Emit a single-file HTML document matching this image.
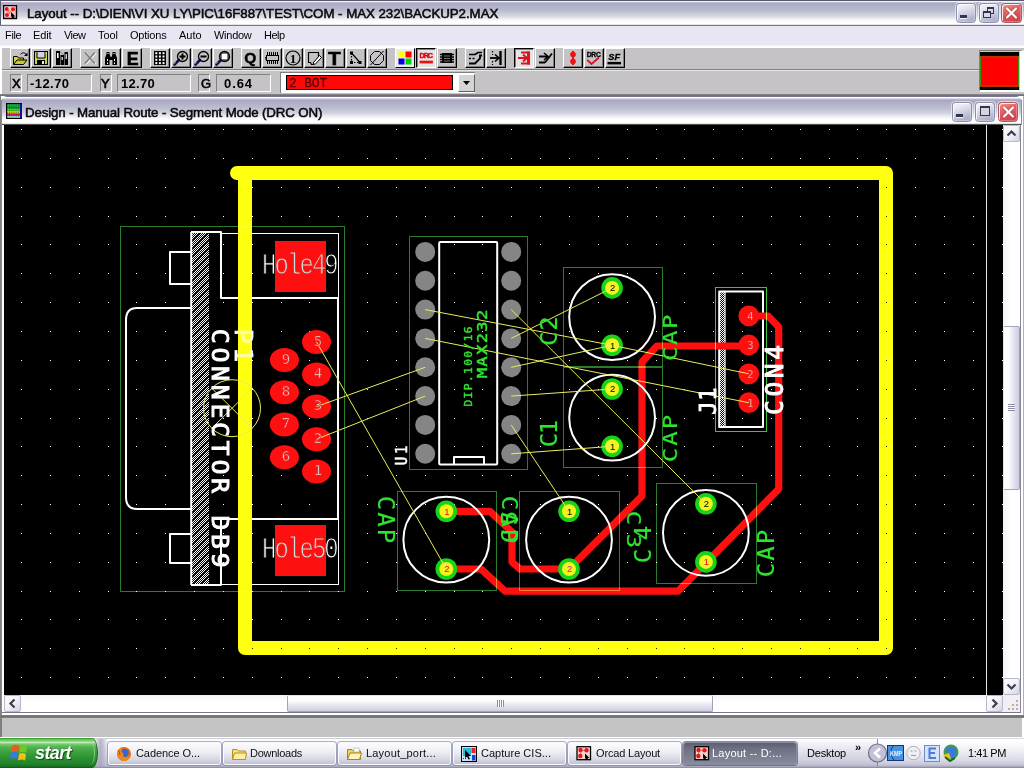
<!DOCTYPE html>
<html lang="en"><head><meta charset="utf-8"><title>Layout</title>
<style>
*{box-sizing:border-box;margin:0;padding:0}
html,body{width:1024px;height:768px;overflow:hidden;background:#c4c3c4;font-family:"Liberation Sans",sans-serif}
#root{position:absolute;left:0;top:0;width:1024px;height:768px;overflow:hidden;background:#c4c3c4}
.t,svg{will-change:transform}
.a{position:absolute}
.t{position:absolute;white-space:pre;line-height:1}
.tb{background:linear-gradient(180deg,#55566a 0px,#55566a 1px,#f4f4ff 1px,#f4f4ff 2px,#c2c0d4 2px,#a9a7bf 4px,#b1b1c8 6px,#b7b9cd 10px,#c5c9d7 13px,#d4d7df 16px,#e6e8ee 18px,#f6f7f8 20px,#ffffff 22px,#ffffff 24px,#dcdce2 24.6px,#7a788c 25px,#7a788c 26px)}
.cb{background:linear-gradient(180deg,#77768a 0px,#77768a 1px,#ffffff 1px,#ffffff 2px,#dcd8ec 2.5px,#a9a6be 4px,#b2b0c8 7px,#b8bace 11px,#c4c8d6 14.5px,#d0d2de 17px,#e6e6ee 19.5px,#fafafc 22.5px,#ffffff 24px,#ffffff 27px,#d0d0d4 27.8px,#404040 28.6px,#000 29px)}
.btn{position:absolute;width:21px;height:21px;border-radius:3.5px;border:1px solid #8c8eaa;box-shadow:0 0 0 1px rgba(255,255,255,.55),inset 1px 1px 0 rgba(255,255,255,.85),inset -1px -1px 0 rgba(255,255,255,.25)}
.bg{background:linear-gradient(160deg,#f6f6fb 0%,#e4e4ee 30%,#bdbfd6 70%,#a2a5c4 100%)}
.bx{background:linear-gradient(160deg,#f2a090 0%,#e46a68 30%,#d85058 65%,#c44048 100%);border-color:#b05860 !important}
.tl{position:absolute;top:48px;width:20px;height:20px;background:#c5c3c6;border-top:1px solid #fff;border-left:1px solid #fff;border-right:1px solid #000;border-bottom:1px solid #000;box-shadow:inset -1px -1px 0 #808080}
.tl.dn{background:#e4e4e4;border-top:1px solid #000;border-left:1px solid #000;border-right:1px solid #fff;border-bottom:1px solid #fff;box-shadow:inset 1px 1px 0 #808080}
.tl svg{position:absolute;left:0;top:0}
.sk{position:absolute;background:#c5c3c6;border-top:1px solid #808080;border-left:1px solid #808080;border-right:1px solid #fff;border-bottom:1px solid #fff}
.tk{position:absolute;top:742px;height:23px;border-radius:3px;border:1px solid #fbfbfd;box-shadow:0 0 0 1px rgba(120,124,160,.6);background:linear-gradient(180deg,#fcfcfe 0%,#eeeff5 40%,#d5d6e3 80%,#c0c1d4 100%)}
.sa{position:absolute;width:17px;height:17px;border:1px solid #b8b8cc;border-radius:2px;background:linear-gradient(135deg,#ffffff 0%,#f4f4fa 45%,#d4d4e2 100%)}
</style></head>
<body>
<div id="root">
<div class="a tb" style="left:0;top:0;width:1024px;height:26px"></div>
<div class="a" style="left:0;top:0;width:1px;height:25px;background:#5a6474"></div>
<svg style="position:absolute;left:3px;top:5px" width="15" height="15" viewBox="0 0 15 15"><rect x="0.5" y="0.5" width="13" height="13" fill="#f6c8c8" stroke="#000" stroke-width="1.4"/><circle cx="3.8" cy="4" r="2" fill="#f01010"/><circle cx="10" cy="4.3" r="2" fill="#f01010"/><circle cx="4" cy="10" r="2" fill="#f01010"/><path d="M6 5L4.5 8.5M8 5.5L6 9" stroke="#f04040" stroke-width="0.8"/><path d="M8 7L12.5 11.5L10.5 11.5L11.5 13L9 13L8 11Z" fill="#000"/><rect x="5.5" y="2" width="1.5" height="1.5" fill="#c8e8e8"/></svg>
<span class="t" style="left:26.7px;top:7.24px;font:normal 13.3px/1 'Liberation Sans',sans-serif;color:#0a0a0a;letter-spacing:-0.042px;-webkit-text-stroke:0.55px #0a0a0a">Layout -- D:\DIEN\VI XU LY\PIC\16F887\TEST\COM - MAX 232\BACKUP2.MAX</span>
<div class="btn bg" style="left:955.5px;top:2.5px;width:20px;height:20px"><div class="a" style="left:3px;top:11.5px;width:7px;height:3px;background:#33354e;box-shadow:0 1px 0 rgba(255,255,255,.8)"></div></div>
<div class="btn bg" style="left:978.5px;top:2.5px;width:20px;height:20px"><div class="a" style="left:7px;top:3.5px;width:7px;height:7px;border:1px solid #33354e;border-top-width:2px"></div><div class="a" style="left:3.5px;top:7px;width:8px;height:7px;border:1px solid #33354e;border-top-width:2px;background:#d8d8e6"></div></div>
<div class="btn bx" style="left:1001px;top:2.5px;width:21px;height:20px"><svg width="19" height="18" viewBox="0 0 19 18" style="position:absolute;left:0;top:0"><path d="M5 4.5L14 13.5M14 4.5L5 13.5" stroke="#7a2020" stroke-width="3.2" stroke-linecap="round" opacity=".45"/><path d="M5 4.5L14 13.5M14 4.5L5 13.5" stroke="#fff" stroke-width="2.2" stroke-linecap="round"/></svg></div>
<div class="a" style="left:0;top:26px;width:1024px;height:19px;background:#e9e6f4"></div>
<div class="a" style="left:0;top:45px;width:1024px;height:3px;background:linear-gradient(180deg,#f0eef8,#ffffff 60%)"></div>
<span class="t" style="left:4.8px;top:29.69px;font:normal 11px/1 'Liberation Sans',sans-serif;color:#000;letter-spacing:-0.334px;">File</span>
<span class="t" style="left:33px;top:29.69px;font:normal 11px/1 'Liberation Sans',sans-serif;color:#000;letter-spacing:-0.117px;">Edit</span>
<span class="t" style="left:63.5px;top:29.69px;font:normal 11px/1 'Liberation Sans',sans-serif;color:#000;letter-spacing:-0.539px;">View</span>
<span class="t" style="left:97.5px;top:29.69px;font:normal 11px/1 'Liberation Sans',sans-serif;color:#000;letter-spacing:-0.047px;">Tool</span>
<span class="t" style="left:129.5px;top:29.69px;font:normal 11px/1 'Liberation Sans',sans-serif;color:#000;letter-spacing:-0.203px;">Options</span>
<span class="t" style="left:178.5px;top:29.69px;font:normal 11px/1 'Liberation Sans',sans-serif;color:#000;letter-spacing:-0.035px;">Auto</span>
<span class="t" style="left:213.5px;top:29.69px;font:normal 11px/1 'Liberation Sans',sans-serif;color:#000;letter-spacing:-0.271px;">Window</span>
<span class="t" style="left:263.5px;top:29.69px;font:normal 11px/1 'Liberation Sans',sans-serif;color:#000;letter-spacing:-0.531px;">Help</span>
<div class="a" style="left:0;top:48px;width:1024px;height:47px;background:#c5c3c6"></div>
<div class="a" style="left:0;top:48px;width:2px;height:47px;background:#fff"></div>
<div class="a" style="left:2px;top:69px;width:977px;height:1px;background:#808080"></div>
<div class="a" style="left:2px;top:70px;width:977px;height:1px;background:#e8e8e8"></div>
<div class="a" style="left:0;top:94px;width:1024px;height:2px;background:linear-gradient(180deg,#8c8a90,#69676f)"></div>
<div class="tl" style="left:10px"><svg width="18" height="18" viewBox="0 0 18 18"><path d="M2.5 15.5V7.5H6.5L7.5 9H12.5V11" fill="#d2d23c" stroke="#000"/><path d="M2.5 15.5L6 11H16L12.5 15.5Z" fill="#c8c832" stroke="#000" stroke-linejoin="round"/><path d="M9.5 5.5C11 3.2 14 3.2 15.5 5.8" fill="none" stroke="#000"/><path d="M16.5 3.5V7H13Z" fill="#000"/></svg></div>
<div class="tl" style="left:31px"><svg width="18" height="18" viewBox="0 0 18 18"><rect x="2.5" y="2.5" width="13" height="13" fill="#c6d64a" stroke="#000"/><rect x="5" y="3" width="8" height="6" fill="#d4d0ea"/><path d="M5 3V9H13V3" fill="none" stroke="#000" stroke-width="1"/><rect x="5" y="11" width="8" height="4.5" fill="#000"/><rect x="10" y="12" width="2" height="3" fill="#eee"/><rect x="13.6" y="3.6" width="1" height="1" fill="#fff"/></svg></div>
<div class="tl" style="left:52px"><svg width="18" height="18" viewBox="0 0 18 18"><rect x="3" y="2" width="4" height="14" fill="#000"/><rect x="7.5" y="6" width="3.5" height="10" fill="#000"/><rect x="11.5" y="3" width="3.5" height="13" fill="#000"/><rect x="4" y="4" width="1.6" height="5" fill="#fff"/><rect x="8.6" y="8" width="1.2" height="3" fill="#fff"/><rect x="12.6" y="5" width="1.2" height="5" fill="#fff"/><path d="M7 2.5L11 6" stroke="#808080" stroke-width="1"/></svg></div>
<div class="tl" style="left:80px"><svg width="18" height="18" viewBox="0 0 18 18"><path d="M5 4L15 15M15 4L5 15" stroke="#fff" stroke-width="1.6"/><path d="M4 3.5L14 14.5M14 3.5L4 14.5" stroke="#808080" stroke-width="1.8"/></svg></div>
<div class="tl" style="left:101px"><svg width="18" height="18" viewBox="0 0 18 18"><path d="M3 16V9L4.5 5V3H7.5V5L8.5 8H9.5L10.5 5V3H13.5V5L15 9V16H10.5V11H7.5V16Z" fill="#000"/><rect x="5" y="10" width="1" height="2" fill="#fff"/><rect x="5" y="13.5" width="1" height="1.5" fill="#fff"/><rect x="12" y="10" width="1" height="2" fill="#fff"/><rect x="12" y="13.5" width="1" height="1.5" fill="#fff"/><rect x="5.5" y="4" width="1" height="1" fill="#fff"/><rect x="11.5" y="4" width="1" height="1" fill="#fff"/></svg></div>
<div class="tl" style="left:122px"><svg width="18" height="18" viewBox="0 0 18 18"><text x="9.8" y="15.6" font-size="17.8" font-weight="bold" text-anchor="middle" font-family="'Liberation Sans',sans-serif" fill="#000" stroke="#000" stroke-width="0.6">E</text></svg></div>
<div class="tl" style="left:150px"><svg width="18" height="18" viewBox="0 0 18 18"><rect x="3" y="2" width="12" height="14" fill="#000"/><rect x="4.3" y="3.2" width="2" height="2" fill="#fff"/><rect x="4.3" y="6.5" width="2" height="2" fill="#fff"/><rect x="4.3" y="9.8" width="2" height="2" fill="#fff"/><rect x="4.3" y="13.099999999999998" width="2" height="2" fill="#fff"/><rect x="7.9" y="3.2" width="2" height="2" fill="#fff"/><rect x="7.9" y="6.5" width="2" height="2" fill="#fff"/><rect x="7.9" y="9.8" width="2" height="2" fill="#fff"/><rect x="7.9" y="13.099999999999998" width="2" height="2" fill="#fff"/><rect x="11.5" y="3.2" width="2" height="2" fill="#fff"/><rect x="11.5" y="6.5" width="2" height="2" fill="#fff"/><rect x="11.5" y="9.8" width="2" height="2" fill="#fff"/><rect x="11.5" y="13.099999999999998" width="2" height="2" fill="#fff"/></svg></div>
<div class="tl" style="left:171px"><svg width="18" height="18" viewBox="0 0 18 18"><path d="M2.5 15.5L7 11" stroke="#10104c" stroke-width="2.6" stroke-linecap="round"/><path d="M2 15L4 13" stroke="#6868c8" stroke-width="1"/><circle cx="10.5" cy="7.5" r="5" fill="none" stroke="#000" stroke-width="1.3"/><path d="M7.5 7.5H13.5M10.5 4.5V10.5" stroke="#000" stroke-width="2"/></svg></div>
<div class="tl" style="left:192px"><svg width="18" height="18" viewBox="0 0 18 18"><path d="M2.5 15.5L7 11" stroke="#10104c" stroke-width="2.6" stroke-linecap="round"/><path d="M2 15L4 13" stroke="#6868c8" stroke-width="1"/><circle cx="10.5" cy="7.5" r="5" fill="none" stroke="#000" stroke-width="1.3"/><path d="M7.5 7.5H13.5" stroke="#000" stroke-width="2"/></svg></div>
<div class="tl" style="left:213px"><svg width="18" height="18" viewBox="0 0 18 18"><path d="M2.5 15.5L7 11" stroke="#10104c" stroke-width="2.6" stroke-linecap="round"/><path d="M2 15L4 13" stroke="#6868c8" stroke-width="1"/><circle cx="10.5" cy="7.5" r="5" fill="none" stroke="#000" stroke-width="1.3"/><rect x="7" y="4" width="7" height="7" fill="#fff" stroke="#000" stroke-width="1"/></svg></div>
<div class="tl" style="left:241px"><svg width="18" height="18" viewBox="0 0 18 18"><text x="8.3" y="14" font-size="15.5" font-weight="bold" text-anchor="middle" font-family="'Liberation Sans',sans-serif" fill="#000" stroke="#000" stroke-width="0.5">Q</text></svg></div>
<div class="tl" style="left:262px"><svg width="18" height="18" viewBox="0 0 18 18"><rect x="3.5" y="6.5" width="12" height="5" fill="none" stroke="#000"/><path d="M4.5 3V6M6.5 3V6M8.5 3V6M10.5 3V6M12.5 3V6M14.5 3V6M4.5 12V15M6.5 12V15M8.5 12V15M10.5 12V15M12.5 12V15M14.5 12V15" stroke="#000"/><path d="M2 8.5H4M2 10H4" stroke="#000"/></svg></div>
<div class="tl" style="left:283px"><svg width="18" height="18" viewBox="0 0 18 18"><circle cx="9" cy="9" r="7" fill="none" stroke="#000" stroke-width="1.2"/><text x="9" y="13.5" font-size="13" font-weight="bold" text-anchor="middle" font-family="'Liberation Serif',serif" fill="#000">1</text></svg></div>
<div class="tl" style="left:304px"><svg width="18" height="18" viewBox="0 0 18 18"><path d="M3.5 3.5H13.5V9L8 15.5H6.5L5.5 13.5H3.5Z" fill="none" stroke="#000" stroke-width="1.2" stroke-linejoin="round"/><path d="M8 14L14.5 6.5L16.5 8.5L10 15.5Z" fill="#fff" stroke="#000" stroke-width="1"/></svg></div>
<div class="tl" style="left:325px"><svg width="18" height="18" viewBox="0 0 18 18"><text x="8.5" y="15.5" font-size="18.2" font-weight="bold" text-anchor="middle" font-family="'Liberation Sans',sans-serif" fill="#000" stroke="#000" stroke-width="0.5" transform="translate(8.5 0) scale(1.15 1) translate(-8.5 0)">T</text></svg></div>
<div class="tl" style="left:346px"><svg width="18" height="18" viewBox="0 0 18 18"><path d="M4.5 4L13 13.5" stroke="#000" stroke-width="1.2"/><path d="M4.5 4V13.5H13" stroke="#000" stroke-width="1.2" stroke-dasharray="1.5 1.5" fill="none"/><rect x="3" y="2.5" width="3" height="3" fill="#000"/><rect x="3" y="12" width="3" height="3" fill="#000"/><rect x="11.5" y="12" width="3" height="3" fill="#000"/></svg></div>
<div class="tl" style="left:367px"><svg width="18" height="18" viewBox="0 0 18 18"><path d="M6.5 2.5H11.5L15.5 6.5V11.5L11.5 15.5H6.5L2.5 11.5V6.5Z" fill="none" stroke="#000" stroke-width="1"/><path d="M2.5 16L15.5 2" stroke="#000" stroke-width="1"/></svg></div>
<div class="tl" style="left:395px"><svg width="18" height="18" viewBox="0 0 18 18"><rect x="0" y="0" width="18" height="18" fill="#ececec"/><rect x="2.5" y="2.5" width="6" height="6" fill="#ffff00"/><rect x="9.5" y="2.5" width="6" height="6" fill="#ff0000"/><rect x="2.5" y="9.5" width="6" height="6" fill="#0000e0"/><rect x="9.5" y="9.5" width="6" height="6" fill="#00d800"/></svg></div>
<div class="tl dn" style="left:416px"><svg width="18" height="18" viewBox="0 0 18 18"><text x="2.6" y="9.3" font-size="7.2" font-weight="bold" font-family="'Liberation Sans',sans-serif" fill="#e00010" stroke="#e00010" stroke-width="0.4" textLength="13.3" lengthAdjust="spacing">DRC</text><rect x="2.6" y="11.7" width="13.3" height="2.7" fill="#e81010"/></svg></div>
<div class="tl" style="left:437px"><svg width="18" height="18" viewBox="0 0 18 18"><rect x="4" y="4" width="10" height="10" fill="#000"/><path d="M2 5.5H16M2 8H16M2 10.5H16M2 13H16" stroke="#000" stroke-width="1.6"/><path d="M6 7H12M6 9.5H12M6 12H12" stroke="#c3c3c3" stroke-width="0.6"/></svg></div>
<div class="tl" style="left:465px"><svg width="18" height="18" viewBox="0 0 18 18"><path d="M3 5.5H9L12 3.5H16" fill="none" stroke="#000" stroke-width="1.6"/><path d="M3 14.5H9L14 9.5V6.5H16" fill="none" stroke="#000" stroke-width="1.8"/><path d="M3 9.5H10" stroke="#000" stroke-width="1.6" stroke-dasharray="2 1.5"/></svg></div>
<div class="tl" style="left:486px"><svg width="18" height="18" viewBox="0 0 18 18"><path d="M13.5 2V16" stroke="#000" stroke-width="2.4"/><path d="M3 9H12" stroke="#000" stroke-width="1.8"/><path d="M8 5.5L12 9L8 12.5" fill="none" stroke="#000" stroke-width="1.6"/><path d="M5.5 2V6M5.5 12V16" stroke="#000" stroke-width="1.2" stroke-dasharray="1.5 1.5"/></svg></div>
<div class="tl dn" style="left:514px"><svg width="18" height="18" viewBox="0 0 18 18"><path d="M3 9H12M8 5.5L12 9L8 12.5" fill="none" stroke="#e01020" stroke-width="2"/><path d="M6 3.5H14V14.5H6" fill="none" stroke="#e01020" stroke-width="2"/><rect x="12" y="2.5" width="3" height="13" fill="#e01020"/></svg></div>
<div class="tl" style="left:535px"><svg width="18" height="18" viewBox="0 0 18 18"><path d="M3 7.5H11M3 13.5H9" stroke="#000" stroke-width="1.8"/><path d="M8 4L12 7.5L8 11" fill="none" stroke="#000" stroke-width="1.6"/><path d="M9 13.5L16 4.5" stroke="#000" stroke-width="1.8"/></svg></div>
<div class="tl" style="left:563px"><svg width="18" height="18" viewBox="0 0 18 18"><circle cx="9" cy="5.5" r="2.8" fill="#f01010"/><circle cx="9" cy="12.5" r="2.8" fill="#f01010"/><rect x="8" y="2" width="2" height="14" fill="#f01010"/></svg></div>
<div class="tl" style="left:584px"><svg width="18" height="18" viewBox="0 0 18 18"><text x="1.8" y="8.2" font-size="6.8" font-weight="bold" font-family="'Liberation Sans',sans-serif" fill="#000" stroke="#000" stroke-width="0.3" textLength="14" lengthAdjust="spacing">DRC</text><path d="M2.2 10.8L6.5 15L14 8.5" fill="none" stroke="#d81020" stroke-width="1.8"/></svg></div>
<div class="tl" style="left:605px"><svg width="18" height="18" viewBox="0 0 18 18"><text x="8.2" y="11.3" font-size="9.2" font-weight="bold" font-style="italic" text-anchor="middle" font-family="'Liberation Sans',sans-serif" fill="#000" stroke="#000" stroke-width="0.3">SF</text><rect x="1.5" y="12.9" width="13.5" height="2.5" fill="#000"/></svg></div>
<div class="sk" style="left:10px;top:74px;width:12px;height:18px"></div>
<div class="sk" style="left:27px;top:74px;width:65px;height:18px"></div>
<div class="sk" style="left:100px;top:74px;width:12px;height:18px"></div>
<div class="sk" style="left:117px;top:74px;width:74px;height:18px"></div>
<div class="sk" style="left:198px;top:74px;width:12px;height:18px"></div>
<div class="sk" style="left:216px;top:74px;width:55px;height:18px"></div>
<span class="t" style="left:11.5px;top:76.8px;font:normal 13px/1 'Liberation Sans',sans-serif;color:#000;letter-spacing:0px;-webkit-text-stroke:0.6px #000">X</span>
<span class="t" style="left:101px;top:76.8px;font:normal 13px/1 'Liberation Sans',sans-serif;color:#000;letter-spacing:0px;-webkit-text-stroke:0.6px #000">Y</span>
<span class="t" style="left:200.5px;top:76.8px;font:normal 13px/1 'Liberation Sans',sans-serif;color:#000;letter-spacing:0px;-webkit-text-stroke:0.6px #000">G</span>
<span class="t" style="left:30px;top:76.8px;font:bold 13px/1 'Liberation Sans',sans-serif;color:#000;letter-spacing:0.438px;">-12.70</span>
<span class="t" style="left:121px;top:76.8px;font:bold 13px/1 'Liberation Sans',sans-serif;color:#000;letter-spacing:0.291px;">12.70</span>
<span class="t" style="left:224px;top:76.8px;font:bold 13px/1 'Liberation Sans',sans-serif;color:#000;letter-spacing:0.922px;">0.64</span>
<div class="a" style="left:280px;top:72px;width:195px;height:21px;background:#fff;border-top:1px solid #808080;border-left:1px solid #808080"></div>
<div class="a" style="left:286px;top:75px;width:167px;height:15px;background:#ff0808;border:1px solid #000"></div>
<div class="a" style="left:458px;top:74px;width:17px;height:18px;background:#d4d4d4;border-top:1px solid #fff;border-left:1px solid #fff;border-right:1px solid #606060;border-bottom:1px solid #606060"></div>
<svg class="a" style="left:463px;top:81px" width="7" height="4"><path d="M0 0H7L3.5 4Z" fill="#000"/></svg>
<span class="t" style="left:289px;top:76.6px;font:normal 13px/1 'Liberation Mono',monospace;color:#560000;letter-spacing:-0.203px;-webkit-text-stroke:0.3px #560000">2 BOT</span>
<div class="a" style="left:979px;top:50px;width:45px;height:42px;background:#c5c3c6;border-top:1px solid #808080;border-left:1px solid #808080;border-right:4px solid #fff;border-bottom:2px solid #fff"></div>
<div class="a" style="left:980px;top:52px;width:39px;height:38px;background:#000"></div>
<div class="a" style="left:980px;top:56px;width:39px;height:31px;background:#ff0000;border:1px solid #2c9a10;border-top:2px solid #c03000;border-bottom:2px solid #c03000"></div>
<div class="a" style="left:0;top:96px;width:1024px;height:621px;background:#fff"></div>
<div class="a cb" style="left:1px;top:96px;width:1021px;height:29px;border-radius:6px 6px 0 0"></div>
<div class="a" style="left:0;top:96px;width:1px;height:642px;background:#808080"></div>
<div class="a" style="left:1px;top:100px;width:1px;height:615px;background:#8c8ca0"></div>
<div class="a" style="left:1021px;top:100px;width:1px;height:25px;background:#8c8ca0"></div>
<div class="a" style="left:1023px;top:96px;width:1px;height:621px;background:#b0b0b0"></div>
<svg style="position:absolute;left:6px;top:103px;width:16px;height:16px" width="15" height="15" viewBox="0 0 15 15"><rect x="0" y="0" width="15" height="15" fill="#000"/><rect x="1" y="1" width="12" height="13" fill="#20c040"/><rect x="13" y="1" width="2" height="13" fill="#1010a0"/><rect x="1" y="3" width="12" height="2.5" fill="#10a040"/><rect x="1" y="5.5" width="12" height="2.5" fill="#60e020"/><rect x="1" y="8" width="12" height="2" fill="#e0e020"/><rect x="1" y="10" width="12" height="2" fill="#e01070"/><rect x="1" y="12" width="12" height="2" fill="#90e0c0"/><path d="M1.5 1V14M3.5 1V14M5.5 1V14M7.5 1V14M9.5 1V14M11.5 1V14" stroke="#083808" stroke-width="0.6" stroke-dasharray="1.5 1"/></svg>
<span class="t" style="left:25.2px;top:105.84px;font:normal 13.3px/1 'Liberation Sans',sans-serif;color:#0a0a0a;letter-spacing:-0.127px;-webkit-text-stroke:0.55px #0a0a0a">Design - Manual Route - Segment Mode (DRC ON)</span>
<div class="btn bg" style="left:952px;top:101.5px;width:20px;height:20px"><div class="a" style="left:3px;top:11.5px;width:7px;height:3px;background:#33354e;box-shadow:0 1px 0 rgba(255,255,255,.8)"></div></div>
<div class="btn bg" style="left:975px;top:101.5px;width:20px;height:20px"><div class="a" style="left:4px;top:3.5px;width:10px;height:10px;border:1px solid #33354e;border-top-width:2px;background:#d4d4e2"></div></div>
<div class="btn bx" style="left:997.5px;top:101.5px;width:20.5px;height:20px"><svg width="19" height="18" viewBox="0 0 19 18" style="position:absolute;left:0;top:0"><path d="M5 4.5L14 13.5M14 4.5L5 13.5" stroke="#7a2020" stroke-width="3.2" stroke-linecap="round" opacity=".45"/><path d="M5 4.5L14 13.5M14 4.5L5 13.5" stroke="#fff" stroke-width="2.2" stroke-linecap="round"/></svg></div>
<svg id="cv" width="999" height="570" viewBox="4 125 999 570" style="position:absolute;left:4px;top:125px;background:#000;display:block;will-change:transform">
<defs>
<pattern id="hat" patternUnits="userSpaceOnUse" x="192" y="233" width="8" height="8"><path d="M-1 9L9 -1M-9 9L1 -1M7 9L17 -1" stroke="#000" stroke-width="0.9"/></pattern>
<pattern id="chk" patternUnits="userSpaceOnUse" width="2" height="2"><rect width="2" height="2" fill="#000"/><rect width="1" height="1" fill="#fff"/><rect x="1" y="1" width="1" height="1" fill="#fff"/></pattern>
</defs>
<rect x="4" y="125" width="999" height="570" fill="#000"/>
<path d="M21 129h1M50 129h1M79 129h1M108 129h1M136 129h1M165 129h1M194 129h1M223 129h1M252 129h1M281 129h1M309 129h1M338 129h1M367 129h1M396 129h1M425 129h1M454 129h1M482 129h1M511 129h1M540 129h1M569 129h1M598 129h1M627 129h1M656 129h1M684 129h1M713 129h1M742 129h1M771 129h1M800 129h1M829 129h1M857 129h1M886 129h1M915 129h1M944 129h1M973 129h1M1002 129h1M21 158h1M50 158h1M79 158h1M108 158h1M136 158h1M165 158h1M194 158h1M223 158h1M252 158h1M281 158h1M309 158h1M338 158h1M367 158h1M396 158h1M425 158h1M454 158h1M482 158h1M511 158h1M540 158h1M569 158h1M598 158h1M627 158h1M656 158h1M684 158h1M713 158h1M742 158h1M771 158h1M800 158h1M829 158h1M857 158h1M886 158h1M915 158h1M944 158h1M973 158h1M1002 158h1M21 187h1M50 187h1M79 187h1M108 187h1M136 187h1M165 187h1M194 187h1M223 187h1M252 187h1M281 187h1M309 187h1M338 187h1M367 187h1M396 187h1M425 187h1M454 187h1M482 187h1M511 187h1M540 187h1M569 187h1M598 187h1M627 187h1M656 187h1M684 187h1M713 187h1M742 187h1M771 187h1M800 187h1M829 187h1M857 187h1M915 187h1M944 187h1M973 187h1M1002 187h1M21 216h1M50 216h1M79 216h1M108 216h1M136 216h1M165 216h1M194 216h1M223 216h1M252 216h1M281 216h1M309 216h1M338 216h1M367 216h1M396 216h1M425 216h1M454 216h1M482 216h1M511 216h1M540 216h1M569 216h1M598 216h1M627 216h1M656 216h1M684 216h1M713 216h1M742 216h1M771 216h1M800 216h1M829 216h1M857 216h1M915 216h1M944 216h1M973 216h1M1002 216h1M21 244h1M50 244h1M79 244h1M108 244h1M136 244h1M165 244h1M194 244h1M223 244h1M252 244h1M281 244h1M309 244h1M338 244h1M367 244h1M396 244h1M425 244h1M454 244h1M482 244h1M511 244h1M540 244h1M569 244h1M598 244h1M627 244h1M656 244h1M684 244h1M713 244h1M742 244h1M771 244h1M800 244h1M829 244h1M857 244h1M915 244h1M944 244h1M973 244h1M1002 244h1M21 273h1M50 273h1M79 273h1M108 273h1M136 273h1M165 273h1M194 273h1M223 273h1M252 273h1M281 273h1M309 273h1M338 273h1M367 273h1M396 273h1M425 273h1M454 273h1M482 273h1M511 273h1M540 273h1M569 273h1M598 273h1M627 273h1M656 273h1M684 273h1M713 273h1M742 273h1M771 273h1M800 273h1M829 273h1M857 273h1M915 273h1M944 273h1M973 273h1M1002 273h1M21 302h1M50 302h1M79 302h1M108 302h1M136 302h1M165 302h1M194 302h1M223 302h1M252 302h1M281 302h1M309 302h1M338 302h1M367 302h1M396 302h1M425 302h1M454 302h1M482 302h1M511 302h1M540 302h1M569 302h1M598 302h1M627 302h1M656 302h1M684 302h1M713 302h1M742 302h1M771 302h1M800 302h1M829 302h1M857 302h1M915 302h1M944 302h1M973 302h1M1002 302h1M21 331h1M50 331h1M79 331h1M108 331h1M136 331h1M165 331h1M194 331h1M223 331h1M252 331h1M281 331h1M309 331h1M338 331h1M367 331h1M396 331h1M425 331h1M454 331h1M482 331h1M511 331h1M540 331h1M569 331h1M598 331h1M627 331h1M656 331h1M684 331h1M713 331h1M742 331h1M771 331h1M800 331h1M829 331h1M857 331h1M915 331h1M944 331h1M973 331h1M1002 331h1M21 360h1M50 360h1M79 360h1M108 360h1M136 360h1M165 360h1M194 360h1M223 360h1M252 360h1M281 360h1M309 360h1M338 360h1M367 360h1M396 360h1M425 360h1M454 360h1M482 360h1M511 360h1M540 360h1M569 360h1M598 360h1M627 360h1M656 360h1M684 360h1M713 360h1M742 360h1M771 360h1M800 360h1M829 360h1M857 360h1M915 360h1M944 360h1M973 360h1M1002 360h1M21 389h1M50 389h1M79 389h1M108 389h1M136 389h1M165 389h1M194 389h1M223 389h1M252 389h1M281 389h1M309 389h1M338 389h1M367 389h1M396 389h1M425 389h1M454 389h1M482 389h1M511 389h1M540 389h1M569 389h1M598 389h1M627 389h1M656 389h1M684 389h1M713 389h1M742 389h1M771 389h1M800 389h1M829 389h1M857 389h1M915 389h1M944 389h1M973 389h1M1002 389h1M21 418h1M50 418h1M79 418h1M108 418h1M136 418h1M165 418h1M194 418h1M223 418h1M252 418h1M281 418h1M309 418h1M338 418h1M367 418h1M396 418h1M425 418h1M454 418h1M482 418h1M511 418h1M540 418h1M569 418h1M598 418h1M627 418h1M656 418h1M684 418h1M713 418h1M742 418h1M771 418h1M800 418h1M829 418h1M857 418h1M915 418h1M944 418h1M973 418h1M1002 418h1M21 446h1M50 446h1M79 446h1M108 446h1M136 446h1M165 446h1M194 446h1M223 446h1M252 446h1M281 446h1M309 446h1M338 446h1M367 446h1M396 446h1M425 446h1M454 446h1M482 446h1M511 446h1M540 446h1M569 446h1M598 446h1M627 446h1M656 446h1M684 446h1M713 446h1M742 446h1M771 446h1M800 446h1M829 446h1M857 446h1M915 446h1M944 446h1M973 446h1M1002 446h1M21 475h1M50 475h1M79 475h1M108 475h1M136 475h1M165 475h1M194 475h1M223 475h1M252 475h1M281 475h1M309 475h1M338 475h1M367 475h1M396 475h1M425 475h1M454 475h1M482 475h1M511 475h1M540 475h1M569 475h1M598 475h1M627 475h1M656 475h1M684 475h1M713 475h1M742 475h1M771 475h1M800 475h1M829 475h1M857 475h1M915 475h1M944 475h1M973 475h1M1002 475h1M21 504h1M50 504h1M79 504h1M108 504h1M136 504h1M165 504h1M194 504h1M223 504h1M252 504h1M281 504h1M309 504h1M338 504h1M367 504h1M396 504h1M425 504h1M454 504h1M482 504h1M511 504h1M540 504h1M569 504h1M598 504h1M627 504h1M656 504h1M684 504h1M713 504h1M742 504h1M771 504h1M800 504h1M829 504h1M857 504h1M915 504h1M944 504h1M973 504h1M1002 504h1M21 533h1M50 533h1M79 533h1M108 533h1M136 533h1M165 533h1M194 533h1M223 533h1M252 533h1M281 533h1M309 533h1M338 533h1M367 533h1M396 533h1M425 533h1M454 533h1M482 533h1M511 533h1M540 533h1M569 533h1M598 533h1M627 533h1M656 533h1M684 533h1M713 533h1M742 533h1M771 533h1M800 533h1M829 533h1M857 533h1M915 533h1M944 533h1M973 533h1M1002 533h1M21 562h1M50 562h1M79 562h1M108 562h1M136 562h1M165 562h1M194 562h1M223 562h1M252 562h1M281 562h1M309 562h1M338 562h1M367 562h1M396 562h1M425 562h1M454 562h1M482 562h1M511 562h1M540 562h1M569 562h1M598 562h1M627 562h1M656 562h1M684 562h1M713 562h1M742 562h1M771 562h1M800 562h1M829 562h1M857 562h1M915 562h1M944 562h1M973 562h1M1002 562h1M21 591h1M50 591h1M79 591h1M108 591h1M136 591h1M165 591h1M194 591h1M223 591h1M252 591h1M281 591h1M309 591h1M338 591h1M367 591h1M396 591h1M425 591h1M454 591h1M482 591h1M511 591h1M540 591h1M569 591h1M598 591h1M627 591h1M656 591h1M684 591h1M713 591h1M742 591h1M771 591h1M800 591h1M829 591h1M857 591h1M915 591h1M944 591h1M973 591h1M1002 591h1M21 619h1M50 619h1M79 619h1M108 619h1M136 619h1M165 619h1M194 619h1M223 619h1M252 619h1M281 619h1M309 619h1M338 619h1M367 619h1M396 619h1M425 619h1M454 619h1M482 619h1M511 619h1M540 619h1M569 619h1M598 619h1M627 619h1M656 619h1M684 619h1M713 619h1M742 619h1M771 619h1M800 619h1M829 619h1M857 619h1M915 619h1M944 619h1M973 619h1M1002 619h1M21 648h1M50 648h1M79 648h1M108 648h1M136 648h1M165 648h1M194 648h1M223 648h1M915 648h1M944 648h1M973 648h1M1002 648h1M21 677h1M50 677h1M79 677h1M108 677h1M136 677h1M165 677h1M194 677h1M223 677h1M252 677h1M281 677h1M309 677h1M338 677h1M367 677h1M396 677h1M425 677h1M454 677h1M482 677h1M511 677h1M540 677h1M569 677h1M598 677h1M627 677h1M656 677h1M684 677h1M713 677h1M742 677h1M771 677h1M800 677h1M829 677h1M857 677h1M886 677h1M915 677h1M944 677h1M973 677h1M1002 677h1" stroke="#fff" stroke-width="1" shape-rendering="crispEdges" transform="translate(0,0.5)"/>
<rect x="986" y="125" width="1" height="570" fill="#e8e8e8"/>
<rect x="191" y="233" width="18" height="351" fill="url(#chk)" shape-rendering="crispEdges"/><rect x="191" y="233" width="18" height="351" fill="url(#hat)"/>
<g fill="none" stroke="#fff" stroke-width="2" stroke-linejoin="round">
<path d="M191.2 232V585"/>
<path d="M191 232H221V298H338V519H221V585H191"/>
<path d="M191 252H170V284H191"/>
<path d="M191 534H170V563H191"/>
<path d="M191 308H137Q126 308 126 320V497Q126 509 137 509H191"/>
</g>
<g fill="none" stroke="#fff" stroke-width="1" shape-rendering="crispEdges">
<path d="M221 233.5H338.5V298"/>
<path d="M221 584.5H338.5V519"/>
</g>
<g fill="none" stroke="#fff" stroke-width="2" stroke-linejoin="round">
<rect x="439.2" y="242" width="58" height="222.5" rx="1"/>
<path d="M454 464V457H484V464"/>
</g>
<rect x="720" y="292" width="5" height="134" fill="url(#chk)" shape-rendering="crispEdges"/>
<rect x="724.5" y="292" width="1.1" height="134" fill="#fff"/>
<g fill="none" stroke="#fff" stroke-width="2" stroke-linejoin="round">
<rect x="719.2" y="291.5" width="43.8" height="135.5"/>
</g>
<g fill="#858585">
<circle cx="425.2" cy="251.9" r="10"/><circle cx="511.2" cy="251.9" r="10"/>
<circle cx="425.2" cy="280.7" r="10"/><circle cx="511.2" cy="280.7" r="10"/>
<circle cx="425.2" cy="309.6" r="10"/><circle cx="511.2" cy="309.6" r="10"/>
<circle cx="425.2" cy="338.4" r="10"/><circle cx="511.2" cy="338.4" r="10"/>
<circle cx="425.2" cy="367.3" r="10"/><circle cx="511.2" cy="367.3" r="10"/>
<circle cx="425.2" cy="396.1" r="10"/><circle cx="511.2" cy="396.1" r="10"/>
<circle cx="425.2" cy="424.9" r="10"/><circle cx="511.2" cy="424.9" r="10"/>
<circle cx="425.2" cy="453.8" r="10"/><circle cx="511.2" cy="453.8" r="10"/>
</g>
<g fill="none" stroke="#ff1010" stroke-width="7.2" stroke-linejoin="round" stroke-linecap="round">
<path d="M446.3 511.3H490L512 532V562L520 569H569"/>
<path d="M446.3 569H481L505 591.2H678L778.7 489V327L768 316H749"/>
<path d="M569 569L642 496V362L657 346H749"/>
</g>
<g fill="none" stroke="#fff" stroke-width="2">
<circle cx="612.1" cy="317.1" r="42.9"/>
<circle cx="612.1" cy="417.7" r="42.9"/>
<circle cx="446.3" cy="539.7" r="42.9"/>
<circle cx="569" cy="539.7" r="42.9"/>
<circle cx="705.9" cy="532.8" r="42.9"/>
</g>
<g fill="#ff1010">
<rect x="275" y="241" width="51" height="51"/>
<rect x="275" y="525" width="51" height="51"/>
<ellipse cx="316.5" cy="341.9" rx="14.5" ry="12"/>
<ellipse cx="316.5" cy="374.4" rx="14.5" ry="12"/>
<ellipse cx="316.5" cy="406.6" rx="14.5" ry="12"/>
<ellipse cx="316.5" cy="439.2" rx="14.5" ry="12"/>
<ellipse cx="316.5" cy="471.4" rx="14.5" ry="12"/>
<ellipse cx="284.4" cy="360" rx="14.5" ry="12"/>
<ellipse cx="284.4" cy="392.3" rx="14.5" ry="12"/>
<ellipse cx="284.4" cy="424.6" rx="14.5" ry="12"/>
<ellipse cx="284.4" cy="457.3" rx="14.5" ry="12"/>
<circle cx="748.8" cy="315.9" r="10.4"/>
<circle cx="748.8" cy="345" r="10.4"/>
<circle cx="748.8" cy="373.8" r="10.4"/>
<circle cx="748.8" cy="402.7" r="10.4"/>
</g>
<circle cx="612.1" cy="287.9" r="10.8" fill="#18d418"/><circle cx="612.1" cy="287.9" r="7" fill="#f4f41c"/>
<circle cx="612.1" cy="345.3" r="10.8" fill="#18d418"/><circle cx="612.1" cy="345.3" r="7" fill="#f4f41c"/>
<circle cx="612.1" cy="389" r="10.8" fill="#18d418"/><circle cx="612.1" cy="389" r="7" fill="#f4f41c"/>
<circle cx="612.1" cy="446.3" r="10.8" fill="#18d418"/><circle cx="612.1" cy="446.3" r="7" fill="#f4f41c"/>
<circle cx="446.3" cy="511.3" r="10.8" fill="#18d418"/><circle cx="446.3" cy="511.3" r="7" fill="#f4f41c"/>
<circle cx="446.3" cy="569" r="10.8" fill="#18d418"/><circle cx="446.3" cy="569" r="7" fill="#f4f41c"/>
<circle cx="569" cy="511.3" r="10.8" fill="#18d418"/><circle cx="569" cy="511.3" r="7" fill="#f4f41c"/>
<circle cx="569" cy="569" r="10.8" fill="#18d418"/><circle cx="569" cy="569" r="7" fill="#f4f41c"/>
<circle cx="705.9" cy="503.8" r="10.8" fill="#18d418"/><circle cx="705.9" cy="503.8" r="7" fill="#f4f41c"/>
<circle cx="705.9" cy="561.9" r="10.8" fill="#18d418"/><circle cx="705.9" cy="561.9" r="7" fill="#f4f41c"/>
<g fill="none" stroke="#ffff10" stroke-width="14" stroke-linejoin="round" stroke-linecap="round">
<path d="M237 173H886V648H245V173"/>
</g>
<path d="M886 187h1M886 216h1M886 244h1M886 273h1M886 302h1M886 331h1M886 360h1M886 389h1M886 418h1M886 446h1M886 475h1M886 504h1M886 533h1M886 562h1M886 591h1M886 619h1M252 648h1M281 648h1M309 648h1M338 648h1M367 648h1M396 648h1M425 648h1M454 648h1M482 648h1M511 648h1M540 648h1M569 648h1M598 648h1M627 648h1M656 648h1M684 648h1M713 648h1M742 648h1M771 648h1M800 648h1M829 648h1M857 648h1M886 648h1" stroke="#1a1a00" stroke-width="1" shape-rendering="crispEdges" transform="translate(0,0.5)"/>
<g fill="none" stroke="#2c7a2c" stroke-width="1" shape-rendering="crispEdges" style="mix-blend-mode:screen">
<rect x="120.5" y="226.5" width="224" height="364.5"/>
<rect x="409.5" y="236.5" width="118" height="233"/>
<rect x="563.5" y="267.5" width="99" height="99"/>
<rect x="563.5" y="367.5" width="99" height="100"/>
<rect x="397.5" y="491.5" width="99" height="99"/>
<rect x="519.5" y="491.5" width="100" height="99"/>
<rect x="656.5" y="483.5" width="100" height="100"/>
</g>
<rect x="715.5" y="287.5" width="51" height="144" fill="none" stroke="#3cc43c" stroke-width="1" shape-rendering="crispEdges" style="mix-blend-mode:screen"/>
<g fill="none" stroke="#ecec5c" stroke-width="1">
<path d="M511.2 309.6L705.9 503.8"/>
<path d="M511.2 338.4L612.1 287.9"/>
<path d="M511.2 367.3L612.1 345.3"/>
<path d="M425.2 309.6L612.1 345.3"/>
<path d="M425.2 338.4L748.8 402.7"/>
<path d="M612.1 345.3L748.8 373.8"/>
<path d="M511.2 396.1L612.1 389"/>
<path d="M511.2 453.8L612.1 446.3"/>
<path d="M511.2 424.9L569 511.3"/>
<path d="M316.5 341.9L446.3 569"/>
<path d="M316.5 406.6L425.2 367.3"/>
<path d="M316.5 439.2L425.2 396.1"/>
<circle cx="232" cy="408.2" r="28.5"/>
<path d="M211.5 388L252.5 428.5M211.5 428.5L252.5 388"/>
</g>
<g font-family="'DejaVu Sans Mono','Liberation Mono',monospace">
<text transform="translate(212.4 330) rotate(90) scale(1.039 1)" x="-1.19" font-size="23.87" letter-spacing="3.6" fill="#fff" stroke="#fff" stroke-width="0.95">CONNECTOR DB9</text>
<linearGradient id="pf" gradientUnits="userSpaceOnUse" x1="0" y1="-20" x2="0" y2="0"><stop offset="0" stop-color="#fff"/><stop offset=".125" stop-color="#fff"/><stop offset=".125" stop-color="#ffffa8"/><stop offset=".825" stop-color="#ffffa8"/><stop offset=".825" stop-color="#fff"/><stop offset="1" stop-color="#fff"/></linearGradient>
<text transform="translate(234.5 330) rotate(90) scale(0.996 1)" x="-1.26" font-size="25.1" letter-spacing="3.46" fill="url(#pf)" stroke="url(#pf)" stroke-width="0.7">P1</text>
<text transform="translate(782.6 413.7) rotate(-90) scale(0.964 1)" x="-1.28" font-size="25.51" letter-spacing="3.72" fill="#fff" stroke="#fff" stroke-width="0.95">CON4</text>
<text transform="translate(716.2 413.7) rotate(-90) scale(0.955 1)" x="-1.15" font-size="23.05" letter-spacing="0.79" fill="#fff" stroke="#fff" stroke-width="0.9">J1</text>
<text transform="translate(407.3 464.6) rotate(-90) scale(0.887 1)" x="-0.79" font-size="15.78" letter-spacing="3.12" fill="#fff" stroke="#fff" stroke-width="0.5">U1</text>
<text transform="translate(487 377.5) rotate(-90) scale(1.161 1)" x="-0.74" font-size="14.81" letter-spacing="1.14" fill="#2fe42f" stroke="#2fe42f" stroke-width="0.5">MAX232</text>
<text transform="translate(472 406) rotate(-90) scale(1.047 1)" x="-0.53" font-size="10.7" letter-spacing="1.35" fill="#2fe42f" stroke="#2fe42f" stroke-width="0.45">DIP.100/16</text>
<text transform="translate(557 344.7) rotate(-90) scale(1.029 1)" x="-1.17" font-size="23.32" letter-spacing="0.73" fill="#2fe42f" stroke="#2fe42f" stroke-width="0.2">C2</text>
<text transform="translate(677 359.7) rotate(-90) scale(1.25 1)" x="-0.96" font-size="19.2" letter-spacing="1.24" fill="#2fe42f" stroke="#2fe42f" stroke-width="0.2">CAP</text>
<text transform="translate(557 446) rotate(-90) scale(1.029 1)" x="-1.17" font-size="23.32" letter-spacing="-1.41" fill="#2fe42f" stroke="#2fe42f" stroke-width="0.2">C1</text>
<text transform="translate(677 461) rotate(-90) scale(1.25 1)" x="-0.96" font-size="19.2" letter-spacing="1.64" fill="#2fe42f" stroke="#2fe42f" stroke-width="0.2">CAP</text>
<text transform="translate(773.7 576) rotate(-90) scale(1.048 1)" x="-1.15" font-size="22.91" letter-spacing="1.96" fill="#2fe42f" stroke="#2fe42f" stroke-width="0.2">CAP</text>
<text transform="translate(378.4 497) rotate(90) scale(1.035 1)" x="-1.16" font-size="23.18" letter-spacing="1.98" fill="#2fe42f" stroke="#2fe42f" stroke-width="0.2">CAP</text>
<text transform="translate(502 497) rotate(90) scale(1.166 1)" x="-1.03" font-size="20.58" letter-spacing="1.76" fill="#2fe42f" stroke="#2fe42f" stroke-width="0.2">CAP</text>
<text transform="translate(517 542) rotate(-90) scale(1.166 1)" x="-1.03" font-size="20.58" letter-spacing="3.05" fill="#2fe42f" stroke="#2fe42f" stroke-width="0.2">C5</text>
<text transform="translate(626.5 512) rotate(90) scale(1.25 1)" x="-0.96" font-size="19.2" letter-spacing="6.84" fill="#2fe42f" stroke="#2fe42f" stroke-width="0.2">C3</text>
<text transform="translate(651 562) rotate(-90) scale(1.029 1)" x="-1.17" font-size="23.32" letter-spacing="8.31" fill="#2fe42f" stroke="#2fe42f" stroke-width="0.2">C4</text>
</g>
<linearGradient id="hf" gradientUnits="userSpaceOnUse" x1="0" y1="0" x2="70" y2="0"><stop offset="0" stop-color="#fff"/><stop offset=".1601" stop-color="#fff"/><stop offset=".1601" stop-color="#c4e4e4"/><stop offset=".7882" stop-color="#c4e4e4"/><stop offset=".7882" stop-color="#fff"/><stop offset="1" stop-color="#fff"/></linearGradient>
<linearGradient id="hs" gradientUnits="userSpaceOnUse" x1="0" y1="0" x2="70" y2="0"><stop offset="0" stop-color="#000"/><stop offset=".1601" stop-color="#000"/><stop offset=".1601" stop-color="#ff1010"/><stop offset=".7882" stop-color="#ff1010"/><stop offset=".7882" stop-color="#000"/><stop offset="1" stop-color="#000"/></linearGradient>
<text transform="translate(262 273.5) scale(1.16 1.42)" font-family="'Liberation Mono',monospace" font-size="20.6" letter-spacing="-1.6" fill="url(#hf)" stroke="url(#hs)" stroke-width="0.7">Hole49</text>
<text transform="translate(262 557.5) scale(1.16 1.42)" font-family="'Liberation Mono',monospace" font-size="20.6" letter-spacing="-1.6" fill="url(#hf)" stroke="url(#hs)" stroke-width="0.7">Hole50</text>
<g font-family="'DejaVu Sans Mono','Liberation Mono',monospace" font-size="14" fill="#d4e4e4" stroke="#ff1010" stroke-width="0.55" text-anchor="middle">
<text x="318" y="345.5">5</text>
<text x="318" y="378">4</text>
<text x="318" y="410.20000000000005">3</text>
<text x="318" y="442.8">2</text>
<text x="318" y="475">1</text>
<text x="285.9" y="363.6">9</text>
<text x="285.9" y="395.90000000000003">8</text>
<text x="285.9" y="428.20000000000005">7</text>
<text x="285.9" y="460.90000000000003">6</text>
</g>
<g font-family="'DejaVu Sans Mono','Liberation Mono',monospace" font-size="10.5" fill="#f4f4f4" stroke="#ff1010" stroke-width="0.35" text-anchor="middle">
<text x="750.3" y="319.7">4</text>
<text x="750.3" y="348.8">3</text>
<text x="750.3" y="377.6">2</text>
<text x="750.3" y="406.5">1</text>
</g>
<g font-family="'Liberation Sans',sans-serif" font-size="9.5" text-anchor="middle">
<text x="612.7" y="291.29999999999995" fill="#000">2</text>
<text x="612.7" y="348.7" fill="#000">1</text>
<text x="612.7" y="392.4" fill="#000">2</text>
<text x="612.7" y="449.7" fill="#000">1</text>
<text x="446.90000000000003" y="514.7" fill="#e01030">1</text>
<text x="446.90000000000003" y="572.4" fill="#e01030">2</text>
<text x="569.6" y="514.7" fill="#000">1</text>
<text x="569.6" y="572.4" fill="#d020a0">2</text>
<text x="706.5" y="507.2" fill="#000">2</text>
<text x="706.5" y="565.3" fill="#e01030">1</text>
</g>
</svg>
<div class="a" style="left:1003px;top:125px;width:17px;height:570px;background:linear-gradient(90deg,#f2f2f8,#ffffff 40%,#ffffff)"></div>
<div class="a" style="left:4px;top:695px;width:999px;height:17px;background:linear-gradient(180deg,#f2f2f8,#ffffff 40%,#ffffff)"></div>
<div class="a" style="left:1003px;top:695px;width:17px;height:17px;background:#f4eef4"></div>
<div class="a" style="left:1020px;top:125px;width:1px;height:588px;background:#84849a"></div>
<div class="a" style="left:2px;top:712px;width:1019px;height:1px;background:#77778c"></div>
<div class="a" style="left:1003px;top:326px;width:17px;height:164px;border:1px solid #a2a2b8;border-left-color:#e4e4ee;border-radius:2px;background:linear-gradient(90deg,#ffffff 0%,#fdfdfe 30%,#e6e6f0 62%,#cdcde1 100%)"></div>
<div class="a" style="left:1008px;top:404px;width:7px;height:7px;background:repeating-linear-gradient(180deg,#8c8ca4 0,#8c8ca4 1px,#fff 1px,#fff 2px)"></div>
<div class="a" style="left:287px;top:695px;width:426px;height:17px;border:1px solid #a2a2b8;border-top-color:#e4e4ee;border-radius:2px;background:linear-gradient(180deg,#ffffff 0%,#fdfdfe 30%,#e6e6f0 62%,#cdcde1 100%)"></div>
<div class="a" style="left:497px;top:700px;width:7px;height:7px;background:repeating-linear-gradient(90deg,#8c8ca4 0,#8c8ca4 1px,#fff 1px,#fff 2px)"></div>
<div class="sa" style="left:1003px;top:125px"><svg width="15" height="15" viewBox="0 0 15 15" style="position:absolute;left:0;top:0"><path d="M3.5 9.5L7.5 5.5L11.5 9.5" fill="none" stroke="#3c3e50" stroke-width="2.2"/></svg></div>
<div class="sa" style="left:1003px;top:678px"><svg width="15" height="15" viewBox="0 0 15 15" style="position:absolute;left:0;top:0"><path d="M3.5 5.5L7.5 9.5L11.5 5.5" fill="none" stroke="#3c3e50" stroke-width="2.2"/></svg></div>
<div class="sa" style="left:4px;top:695px"><svg width="15" height="15" viewBox="0 0 15 15" style="position:absolute;left:0;top:0"><path d="M9.5 3.5L5.5 7.5L9.5 11.5" fill="none" stroke="#3c3e50" stroke-width="2.2"/></svg></div>
<div class="sa" style="left:986px;top:695px"><svg width="15" height="15" viewBox="0 0 15 15" style="position:absolute;left:0;top:0"><path d="M5.5 3.5L9.5 7.5L5.5 11.5" fill="none" stroke="#3c3e50" stroke-width="2.2"/></svg></div>
<svg style="position:absolute;left:1007px;top:699px" width="12" height="12" viewBox="0 0 12 12"><g fill="#b8b49c"><rect x="9" y="1" width="2" height="2"/><rect x="9" y="5" width="2" height="2"/><rect x="5" y="5" width="2" height="2"/><rect x="9" y="9" width="2" height="2"/><rect x="5" y="9" width="2" height="2"/><rect x="1" y="9" width="2" height="2"/></g></svg>
<div class="a" style="left:0;top:715px;width:1024px;height:3px;background:linear-gradient(180deg,#8a8a8e 0,#707074 1px,#707074 2.4px,#b4b3b5 3px)"></div>
<div class="a" style="left:2px;top:718px;width:1022px;height:19px;background:#c4c3c4"></div>
<div class="a" style="left:0;top:718px;width:2px;height:19px;background:#808080"></div>
<div class="a" style="left:1022px;top:718px;width:2px;height:19px;background:#fff"></div>
<div class="a" style="left:0;top:737px;width:1024px;height:1px;background:#fff"></div>
<div class="a" style="left:0;top:738px;width:1024px;height:30px;background:linear-gradient(180deg,#9a9aae 0,#ffffff 1px,#f6f6fa 4px,#e4e4ee 12px,#d0d0de 22px,#c0c0d2 27px,#a4a4ba 29px,#7c7c94 30px)"></div>
<div class="a" style="left:94px;top:739px;width:14px;height:28px;background:linear-gradient(90deg,rgba(160,160,186,.0) 0,rgba(160,160,186,.75) 45%,rgba(170,170,196,.55) 70%,rgba(200,200,220,0) 100%)"></div>
<div class="a" style="left:0;top:738px;width:98px;height:30px;border-radius:0 6px 6px 0/0 15px 15px 0;border-right:1px solid #1a5c1a;background:linear-gradient(180deg,#1c7a1c 0,#5cc44c 1px,#7ad46c 3px,#c0eab8 4.5px,#7ccc74 6px,#52b252 9px,#3ca23e 14px,#2c9232 20px,#21832a 26px,#176c1e 29px,#0c5010 30px)"></div>
<div class="a" style="left:89px;top:741px;width:6px;height:24px;border-radius:0 5px 5px 0/0 12px 12px 0;border-right:1.5px solid rgba(150,230,140,.7)"></div>
<svg style="position:absolute;left:10px;top:743px" width="18" height="18" viewBox="0 0 18 18"><path d="M2 3Q5.5 0.5 9 3L8 9Q5 7 1 9Z" fill="#e86018"/><path d="M10 3.5Q13.5 1.5 17 4L16 10Q13 8 9 10Z" fill="#70c820"/><path d="M0.8 10Q4.5 8 8 10L7 16Q4 14 0 16Z" fill="#3878e8"/><path d="M9 11Q12.5 9 16 11.5L15 17.5Q12 15.5 8 17.5Z" fill="#f8c010"/></svg>
<span class="t" style="left:35px;top:743.76px;font:bold 18px/1 'Liberation Sans',sans-serif;color:#fff;letter-spacing:-0.603px;font-style:italic;text-shadow:1px 1px 1px rgba(0,40,0,.7)">start</span>
<div class="tk" style="left:108px;width:113px"></div>
<svg style="position:absolute;left:116px;top:746px" width="16" height="16" viewBox="0 0 16 16"><circle cx="8" cy="8" r="7" fill="#e86a10"/><circle cx="8.5" cy="7" r="4.2" fill="#3868c8"/><path d="M1.5 6Q3 1 8 1Q5 3 5.5 6Q8 7 7 10Q10 13 14 9Q13 15 8 15Q2 15 1.5 6Z" fill="#f08818"/><path d="M2 4Q4 6 4 9" stroke="#c03808" stroke-width="1" fill="none"/></svg>
<span class="t" style="left:136px;top:747.69px;font:normal 11px/1 'Liberation Sans',sans-serif;color:#101010;letter-spacing:-0.069px;">Cadence O...</span>
<div class="tk" style="left:223px;width:113px"></div>
<svg style="position:absolute;left:231px;top:746px" width="16" height="16" viewBox="0 0 16 16"><path d="M1.5 13.5V3.5H6L7.5 5H14.5V13.5Z" fill="#f8e078" stroke="#b89020" stroke-width="1"/><path d="M1.5 13.5L3.5 7H15.5L14.5 13.5Z" fill="#fcf0a0" stroke="#b89020" stroke-width="1" stroke-linejoin="round"/></svg>
<span class="t" style="left:250px;top:747.69px;font:normal 11px/1 'Liberation Sans',sans-serif;color:#101010;letter-spacing:-0.269px;">Downloads</span>
<div class="tk" style="left:338px;width:113px"></div>
<svg style="position:absolute;left:346px;top:746px" width="16" height="16" viewBox="0 0 16 16"><path d="M1.5 13.5V3.5H6L7.5 5H14.5V13.5Z" fill="#f0d468" stroke="#a88018" stroke-width="1"/><path d="M1.5 13.5L4 7H15.5L13.5 13.5Z" fill="#fcf4b8" stroke="#a88018" stroke-width="1" stroke-linejoin="round"/><rect x="8" y="2" width="5" height="4" fill="#fff" stroke="#a0a0a0" stroke-width="0.5"/></svg>
<span class="t" style="left:366px;top:747.69px;font:normal 11px/1 'Liberation Sans',sans-serif;color:#101010;letter-spacing:0.194px;">Layout_port...</span>
<div class="tk" style="left:453px;width:113px"></div>
<svg style="position:absolute;left:461px;top:746px" width="16" height="16" viewBox="0 0 16 16"><rect x="0.5" y="0.5" width="15" height="15" fill="#c8e4f4" stroke="#000"/><rect x="2" y="2" width="8" height="8" fill="#28b8d8"/><rect x="10.5" y="2" width="4" height="5" fill="#e82020"/><rect x="11" y="9" width="3.5" height="5.5" fill="#2040d0"/><path d="M4 4L10 10L7.5 10L9 13L7.5 13.5L6 10.5L4 12Z" fill="#000"/><path d="M2 12.5H6" stroke="#404040" stroke-dasharray="1 1"/></svg>
<span class="t" style="left:481px;top:747.69px;font:normal 11px/1 'Liberation Sans',sans-serif;color:#101010;letter-spacing:0.021px;">Capture CIS...</span>
<div class="tk" style="left:568px;width:113px"></div>
<svg style="position:absolute;left:576px;top:746px" width="16" height="16" viewBox="0 0 16 16"><rect x="1" y="0.7" width="13.5" height="13" fill="#f6d4d4" stroke="#000" stroke-width="1.3"/><circle cx="4.5" cy="4" r="2.2" fill="#e81818"/><circle cx="10.5" cy="4.3" r="2.2" fill="#e81818"/><circle cx="4.3" cy="10" r="2.2" fill="#e81818"/><path d="M6 4L9 4.5M5 6L4.5 8" stroke="#e84040" stroke-width="0.9"/><path d="M9 7.5L13.5 12L11.5 12L12.5 13.7L10.5 13.7L9.6 12.2L9 13Z" fill="#000"/></svg>
<span class="t" style="left:596px;top:747.69px;font:normal 11px/1 'Liberation Sans',sans-serif;color:#101010;letter-spacing:-0.171px;">Orcad Layout</span>
<div class="tk" style="left:683px;width:114px;border-color:#8a8a9c;background:linear-gradient(180deg,#5c6072 0%,#6c7082 25%,#7c8092 70%,#888ca0 100%);box-shadow:0 0 0 1px rgba(70,70,90,.6)"></div>
<svg style="position:absolute;left:694px;top:746px" width="16" height="16" viewBox="0 0 16 16"><rect x="1" y="0.7" width="13.5" height="13" fill="#f6d4d4" stroke="#000" stroke-width="1.3"/><circle cx="4.5" cy="4" r="2.2" fill="#e81818"/><circle cx="10.5" cy="4.3" r="2.2" fill="#e81818"/><circle cx="4.3" cy="10" r="2.2" fill="#e81818"/><path d="M6 4L9 4.5M5 6L4.5 8" stroke="#e84040" stroke-width="0.9"/><path d="M9 7.5L13.5 12L11.5 12L12.5 13.7L10.5 13.7L9.6 12.2L9 13Z" fill="#000"/></svg>
<span class="t" style="left:712px;top:747.69px;font:normal 11px/1 'Liberation Sans',sans-serif;color:#fff;letter-spacing:0.224px;">Layout -- D:...</span>
<span class="t" style="left:807px;top:747.69px;font:normal 11px/1 'Liberation Sans',sans-serif;color:#000;letter-spacing:-0.194px;">Desktop</span>
<span class="t" style="left:855px;top:741.69px;font:bold 11px/1 'Liberation Sans',sans-serif;color:#000;letter-spacing:0px;">»</span>
<div class="a" style="left:877px;top:738px;width:147px;height:30px;background:linear-gradient(180deg,#b0b0c4 0,#ffffff 1px,#fafafc 6px,#ececf4 14px,#dadae6 22px,#c4c4d6 27px,#a0a0b8 29px,#7c7c94 30px)"></div>
<div class="a" style="left:877px;top:739px;width:1px;height:28px;background:#8c8ca0"></div>
<svg style="position:absolute;left:866px;top:741px" width="150" height="26" viewBox="0 0 150 26"><circle cx="11.5" cy="12" r="9" fill="#c4c0d8" stroke="#6c6c84" stroke-width="1.2"/><path d="M14 7.5L9 12L14 16.5" fill="none" stroke="#fff" stroke-width="2.6"/><rect x="21.5" y="4.5" width="16" height="15" fill="#4890e0" stroke="#103878"/><path d="M27 5Q22 12 28 19" fill="none" stroke="#103878"/><text x="30" y="14.5" font-size="7" font-weight="bold" text-anchor="middle" font-family="'Liberation Sans',sans-serif" fill="#e8f8ff" textLength="12" lengthAdjust="spacingAndGlyphs">KMP</text><circle cx="47.5" cy="12" r="6.7" fill="#f0f0f4" stroke="#b0b0c0"/><path d="M44.5 10H46.5M48.5 10H50.5M45 14.5H50" stroke="#9898a8" stroke-width="1"/><rect x="58.5" y="4.5" width="15" height="16" fill="#d4e4fc" stroke="#6c8cd8"/><path d="M70 7.5H63.5V12H69M63.5 12V17H70" fill="none" stroke="#5078d8" stroke-width="2"/><circle cx="85" cy="11" r="7.5" fill="#38a048"/><path d="M79 8Q85 3 91 8Q88 11 91 14Q85 19 80 15Q83 12 79 8Z" fill="#3c78d8"/><path d="M77 14L83 12L85 17L81 19Z" fill="#e8c020"/><path d="M79 16L84 20L89 17" fill="none" stroke="#186028" stroke-width="2"/></svg>
<span class="t" style="left:968px;top:747.69px;font:normal 11px/1 'Liberation Sans',sans-serif;color:#000;letter-spacing:-0.424px;">1:41 PM</span>
</div>
</body></html>
